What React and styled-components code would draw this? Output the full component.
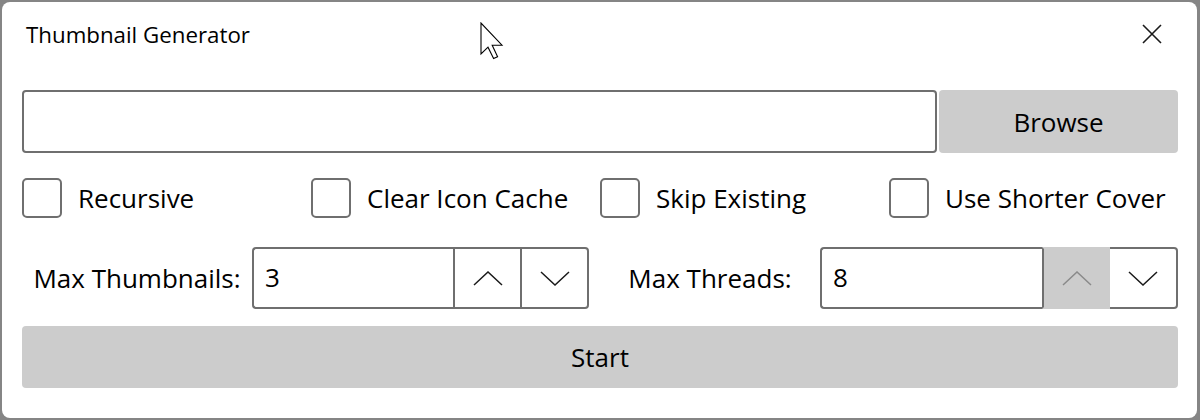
import styled, { createGlobalStyle } from 'styled-components';

const GlobalStyle = createGlobalStyle`
  html, body {
    margin: 0;
    padding: 0;
    background: #858585;
  }
  body {
    font-family: "Open Sans", "Noto Sans", sans-serif;
    color: #000000;
  }
`;

const Frame = styled.div`
  position: relative;
  box-sizing: border-box;
  margin: 2px 3px 2px 2px;
  height: 416px;
  background: #ffffff;
  border-radius: 8px;
  padding: 0 19px 0 20px;
  display: flex;
  flex-direction: column;
`;

const TitleBar = styled.div`
  height: 64px;
  display: flex;
  align-items: center;
  justify-content: space-between;
  margin-bottom: 24px;
`;

const Title = styled.div`
  font-size: 22.3px;
  padding-left: 4px;
`;

const CloseButton = styled.div`
  width: 20px;
  height: 20px;
  margin-right: 16px;
  display: flex;
`;

const PathRow = styled.div`
  display: flex;
  gap: 2px;
  height: 63px;
`;

const PathInput = styled.input`
  flex: 1;
  width: 0;
  box-sizing: border-box;
  height: 100%;
  border: 2px solid #6f6f6f;
  border-radius: 4px;
  outline: none;
  font: inherit;
  font-size: 26px;
  padding: 0 12px;
`;

const GrayButton = styled.button`
  box-sizing: border-box;
  width: ${(p) => p.width || 'auto'};
  height: ${(p) => p.height || '100%'};
  border: none;
  border-radius: 4px;
  background: #cccccc;
  color: #000000;
  font-family: inherit;
  font-size: 26px;
  padding: 0;
  margin-top: ${(p) => p.top || 0};
  cursor: default;
`;

const CheckRow = styled.div`
  margin-top: 25px;
  height: 40px;
  display: grid;
  grid-template-columns: repeat(4, 1fr);
`;

const CheckItem = styled.label`
  display: flex;
  align-items: center;
  gap: 16px;
  font-size: 26px;
  white-space: nowrap;
`;

const Box = styled.span`
  box-sizing: border-box;
  width: 40px;
  height: 40px;
  border: 2px solid #6f6f6f;
  border-radius: 5px;
  flex-shrink: 0;
`;

const NumberRow = styled.div`
  margin-top: 29px;
  height: 62px;
  display: flex;
`;

const NumberGroup = styled.div`
  display: flex;
  flex: ${(p) => (p.width ? `0 0 ${p.width}px` : '1 1 0')};
  min-width: 0;
  box-sizing: border-box;
  padding-right: ${(p) => p.padRight || 0}px;
`;

const NumberLabel = styled.div`
  width: ${(p) => p.width}px;
  flex-shrink: 0;
  display: flex;
  align-items: center;
  justify-content: center;
  font-size: 26px;
  white-space: nowrap;
`;

const NumberBox = styled.div`
  flex: 1;
  min-width: 0;
  display: flex;
`;

const NumberField = styled.input`
  flex: 1;
  width: 0;
  box-sizing: border-box;
  border: 2px solid #6f6f6f;
  border-right: none;
  border-radius: 4px 0 0 4px;
  outline: none;
  font: inherit;
  font-size: 26px;
  padding: 0 0 2px 11px;
`;

const StepButton = styled.div`
  box-sizing: border-box;
  flex: 0 0 ${(p) => p.width}px;
  display: flex;
  align-items: center;
  justify-content: center;
  background: ${(p) => (p.disabled ? '#cccccc' : '#ffffff')};
  border-top: 2px solid ${(p) => (p.disabled ? '#cccccc' : '#6f6f6f')};
  border-bottom: 2px solid ${(p) => (p.disabled ? '#cccccc' : '#6f6f6f')};
  border-left: ${(p) => (p.noLeft ? 'none' : '2px solid #6f6f6f')};
  border-right: ${(p) => (p.last ? '2px solid #6f6f6f' : 'none')};
  border-radius: ${(p) => (p.last ? '0 4px 4px 0' : '0')};
`;

const Cursor = styled.svg`
  position: absolute;
  left: 478px;
  top: 20px;
  pointer-events: none;
`;

const Chevron = ({ up, color = '#1a1a1a' }) => (
  <svg width="30" height="15" viewBox="0 0 30 15">
    <polyline
      points={up ? '1,14 15,1 29,14' : '1,1 15,14 29,1'}
      fill="none"
      stroke={color}
      strokeWidth="1.5"
    />
  </svg>
);

const labels = ['Recursive', 'Clear Icon Cache', 'Skip Existing', 'Use Shorter Cover'];

export default function App() {
  return (
    <>
      <GlobalStyle />
      <Frame>
        <TitleBar>
          <Title>Thumbnail Generator</Title>
          <CloseButton>
            <svg width="20" height="20" viewBox="0 0 20 20">
              <path d="M1 1 L19 19 M19 1 L1 19" stroke="#1a1a1a" strokeWidth="1.6" fill="none" />
            </svg>
          </CloseButton>
        </TitleBar>

        <PathRow>
          <PathInput defaultValue="" />
          <GrayButton width="239px">Browse</GrayButton>
        </PathRow>

        <CheckRow>
          {labels.map((l) => (
            <CheckItem key={l}>
              <Box />
              {l}
            </CheckItem>
          ))}
        </CheckRow>

        <NumberRow>
          <NumberGroup width={578} padRight={11}>
            <NumberLabel width={230}>Max Thumbnails:</NumberLabel>
            <NumberBox>
              <NumberField defaultValue="3" />
              <StepButton width={67}>
                <Chevron up />
              </StepButton>
              <StepButton width={69} last>
                <Chevron />
              </StepButton>
            </NumberBox>
          </NumberGroup>
          <NumberGroup>
            <NumberLabel width={220}>Max Threads:</NumberLabel>
            <NumberBox>
              <NumberField defaultValue="8" />
              <StepButton width={68} disabled>
                <Chevron up color="#8a8a8a" />
              </StepButton>
              <StepButton width={68} last noLeft>
                <Chevron />
              </StepButton>
            </NumberBox>
          </NumberGroup>
        </NumberRow>

        <GrayButton height="62px" top="17px">Start</GrayButton>

        <Cursor width="24" height="38" viewBox="0 0 12 19">
          <polygon
            points="0.5,0.5 0.5,16 4,12.6 6.8,18.3 8.8,17.4 6.1,11.6 11,11.6"
            fill="#ffffff"
            stroke="#000000"
            strokeWidth="0.55"
          />
        </Cursor>
      </Frame>
    </>
  );
}
